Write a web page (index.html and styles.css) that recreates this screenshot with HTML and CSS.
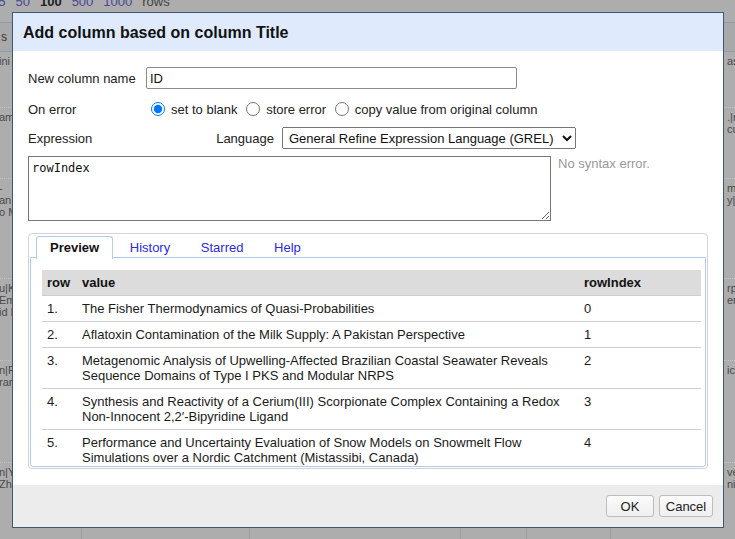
FILE: index.html
```html
<!DOCTYPE html>
<html>
<head>
<meta charset="utf-8">
<link rel="stylesheet" href="styles.css">
</head>
<body>
<div class="page">
  <div class="pager">
    <a class="pg">25</a><a class="pg">50</a><b class="pg cur">100</b><a class="pg">500</a><a class="pg">1000</a><span class="pg">rows</span>
  </div>
  <div class="bg-head"><span class="bh-l">s</span></div>
  <div class="bg-row h56">
    <div class="c c1"><div class="sl">ini</div></div><div class="c c2"></div><div class="c c3"></div><div class="c c4"></div><div class="c c5"></div><div class="c c6"><div class="sr">asi-</div></div>
  </div>
  <div class="bg-row h71">
    <div class="c c1"><div class="sl">am</div></div><div class="c c2"></div><div class="c c3"></div><div class="c c4"></div><div class="c c5"></div><div class="c c6"><div class="sr">.|m</div><div class="sr">cu</div></div>
  </div>
  <div class="bg-row h100">
    <div class="c c1"><div class="sl">-</div><div class="sl">an</div><div class="sl">o M</div></div><div class="c c2"></div><div class="c c3"></div><div class="c c4"></div><div class="c c5"></div><div class="c c6"><div class="sr">mi</div><div class="sr">y|C</div></div>
  </div>
  <div class="bg-row h82">
    <div class="c c1"><div class="sl">u|K</div><div class="sl">Em</div><div class="sl">id I</div></div><div class="c c2"></div><div class="c c3"></div><div class="c c4"></div><div class="c c5"></div><div class="c c6"><div class="sr">rpi</div><div class="sr">em</div></div>
  </div>
  <div class="bg-row h102">
    <div class="c c1"><div class="sl">n|R</div><div class="sl">ran</div></div><div class="c c2"></div><div class="c c3"></div><div class="c c4"></div><div class="c c5"></div><div class="c c6"><div class="sr">ica</div></div>
  </div>
  <div class="bg-row last">
    <div class="c c1"><div class="sl">n|Y</div><div class="sl">Zh</div></div><div class="c c2"></div><div class="c c3"></div><div class="c c4"></div><div class="c c5"></div><div class="c c6"><div class="sr">ves</div><div class="sr">nic</div></div>
  </div>
</div>

<div class="dialog">
  <div class="dlg-head">Add column based on column Title</div>
  <div class="dlg-body">
    <div class="frow">
      <label class="flabel" for="colname">New column name</label>
      <input id="colname" class="tinput" type="text" value="ID">
    </div>
    <div class="frow r2">
      <span class="flabel">On error</span>
      <span class="radios">
        <input type="radio" name="onerr" id="o1" checked><label for="o1">set to blank</label>
        <input type="radio" name="onerr" id="o2"><label for="o2">store error</label>
        <input type="radio" name="onerr" id="o3"><label for="o3">copy value from original column</label>
      </span>
    </div>
    <div class="frow r3">
      <span class="flabel grow">Expression</span>
      <label class="lang" for="lang">Language</label>
      <select id="lang" class="lsel"><option>General Refine Expression Language (GREL)</option></select>
    </div>
    <div class="exprow">
      <textarea class="expr" spellcheck="false">rowIndex</textarea>
      <div class="status">No syntax error.</div>
    </div>
    <div class="tabs">
      <ul class="tabnav">
        <li class="tab active">Preview</li>
        <li class="tab">History</li>
        <li class="tab">Starred</li>
        <li class="tab">Help</li>
      </ul>
      <div class="panel">
        <table class="prev">
          <colgroup><col class="k1"><col class="k2"><col class="k3"></colgroup>
          <thead><tr><th>row</th><th>value</th><th>rowIndex</th></tr></thead>
          <tbody>
            <tr><td>1.</td><td>The Fisher Thermodynamics of Quasi-Probabilities</td><td>0</td></tr>
            <tr><td>2.</td><td>Aflatoxin Contamination of the Milk Supply: A Pakistan Perspective</td><td>1</td></tr>
            <tr><td>3.</td><td>Metagenomic Analysis of Upwelling-Affected Brazilian Coastal Seawater Reveals Sequence Domains of Type I PKS and Modular NRPS</td><td>2</td></tr>
            <tr><td>4.</td><td>Synthesis and Reactivity of a Cerium(III) Scorpionate Complex Containing a Redox Non-Innocent 2,2′-Bipyridine Ligand</td><td>3</td></tr>
            <tr><td>5.</td><td>Performance and Uncertainty Evaluation of Snow Models on Snowmelt Flow Simulations over a Nordic Catchment (Mistassibi, Canada)</td><td>4</td></tr>
          </tbody>
        </table>
      </div>
    </div>
  </div>
  <div class="dlg-foot">
    <button class="btn ok">OK</button>
    <button class="btn cancel">Cancel</button>
  </div>
</div>
</body>
</html>
```

FILE: styles.css
```css
html, body {
  margin: 0;
  padding: 0;
}
body {
  width: 735px;
  height: 539px;
  overflow: hidden;
  position: relative;
  background: #adadad;
  font-family: "Liberation Sans", Arial, sans-serif;
}

/* background page under the modal overlay */
.page {
  color: #4a4a4a;
  font-size: 11px;
  line-height: 12px;
}
.pager {
  height: 22px;
  display: flex;
  gap: 10px;
  margin-left: -9px;
  font-size: 13px;
  line-height: 15px;
  overflow: hidden;
}
.pg {
  margin-top: -6px;
}
a.pg {
  color: #47479a;
}
.cur {
  color: #222;
}
.pager span.pg {
  color: #444;
}
.bg-head {
  height: 28px;
  border-top: 1px solid #8f9bb2;
  border-bottom: 1px solid #8f9bb2;
  background: #a9a9a9;
  font-size: 12px;
  line-height: 28px;
  color: #333;
  overflow: hidden;
  white-space: nowrap;
}
.bh-l {
  display: inline-block;
  margin-left: 1px;
}
.bg-row {
  display: flex;
  border-bottom: 1px dotted #c2c2c2;
  box-sizing: border-box;
}
.h56 { height: 56px; }
.h71 { height: 71px; }
.h100 { height: 100px; }
.h82 { height: 82px; }
.h102 { height: 102px; }
.last { height: 80px; border-bottom: none; }
.c {
  box-sizing: border-box;
  border-left: 1px solid #9d9d9d;
  overflow: hidden;
  white-space: nowrap;
  padding-top: 3px;
}
.c1 { width: 81px; border-left: none; }
.c2 { width: 168px; }
.c3 { width: 211px; }
.c4 { width: 66px; }
.c5 { width: 84px; }
.c6 { flex: 1; padding-left: 116px; }
.sl {
  margin-left: -1px;
}

/* dialog */
.dialog {
  position: absolute;
  left: 12px;
  top: 12px;
  width: 710px;
  height: 514px;
  border: 1px solid #3d5874;
  background: #fff;
  display: flex;
  flex-direction: column;
  color: #222;
  font-size: 13px;
}
.dlg-head {
  height: 38px;
  flex: none;
  background: #dfebfc;
  padding-left: 10px;
  font-weight: bold;
  font-size: 16px;
  line-height: 39px;
  color: #111;
}
.dlg-body {
  flex: 1;
  padding: 16px 15px 0 15px;
}
.frow {
  display: flex;
  align-items: center;
  height: 22px;
}
.r2 { margin-top: 9px; }
.r3 { margin-top: 7px; width: 548px; }
.flabel {
  width: 118px;
  flex: none;
}
.grow { flex: 1; }
.tinput {
  box-sizing: border-box;
  width: 371px;
  height: 22px;
  margin: 0;
  padding: 1px 3px;
  border: 1px solid #8a8a8a;
  border-radius: 2px;
  font: 13px "Liberation Sans", Arial, sans-serif;
  color: #111;
}
.radios input {
  width: 14px;
  height: 14px;
  margin: 0 6px 0 5px;
  vertical-align: -2px;
}
.lang {
  margin-right: 8px;
}
.lsel {
  box-sizing: border-box;
  width: 294px;
  height: 22px;
  margin: 0;
  padding-left: 2px;
  font: 13px "Liberation Sans", Arial, sans-serif;
  color: #111;
}
.exprow {
  display: flex;
  margin-top: 7px;
}
.expr {
  box-sizing: border-box;
  width: 523px;
  height: 65px;
  margin: 0;
  padding: 4px 3px 2px 3px;
  border: 1px solid #767676;
  font: 12px "DejaVu Sans Mono", monospace;
  line-height: 15px;
  color: #111;
  resize: both;
}
.status {
  margin-left: 7px;
  color: #999;
}

/* tabs */
.tabs {
  margin-top: 12px;
  box-sizing: border-box;
  width: 680px;
  height: 236px;
  border: 1px solid #d3d3d3;
  border-radius: 4px;
  padding: 1px;
}
.tabnav {
  list-style: none;
  margin: 0;
  padding: 1px 0 0 6px;
  display: flex;
  height: 21px;
}
.tab {
  position: relative;
  z-index: 1;
  flex: none;
  align-self: flex-start;
  padding: 3px 13px 4px;
  margin-right: 2.6px;
  border: 1px solid transparent;
  border-bottom: none;
  line-height: 15px;
  color: #2a2ae8;
  border-radius: 3px 3px 0 0;
}
.tab.active {
  background: #fff;
  border-color: #b3cbf0;
  color: #111;
  font-weight: bold;
}
.panel {
  box-sizing: border-box;
  height: 210px;
  border: 1px solid #b3cbf0;
  border-radius: 0 0 3px 3px;
  padding: 12px 4px 0 11px;
  overflow: hidden;
}
.prev {
  width: 100%;
  border-collapse: collapse;
  table-layout: fixed;
  line-height: 15px;
  color: #1a1a1a;
}
.k1 { width: 35px; }
.k3 { width: 122px; }
.prev th {
  background: #dcdcdc;
  text-align: left;
  font-weight: bold;
  padding: 5px 5px;
  color: #111;
}
.prev td {
  padding: 5px 5px;
  border-top: 1px solid #cfcfcf;
  vertical-align: top;
}

/* footer */
.dlg-foot {
  height: 42px;
  flex: none;
  background: #ececec;
  display: flex;
  justify-content: flex-end;
  align-items: center;
  gap: 5px;
  padding-right: 10px;
}
.btn {
  box-sizing: border-box;
  height: 22px;
  border: 1px solid #bdbdbd;
  border-radius: 3px;
  background: linear-gradient(#fbfbfb, #efefef);
  font: 13px "Liberation Sans", Arial, sans-serif;
  color: #222;
  padding: 0;
}
.ok { width: 48px; }
.cancel { width: 54px; }
```
